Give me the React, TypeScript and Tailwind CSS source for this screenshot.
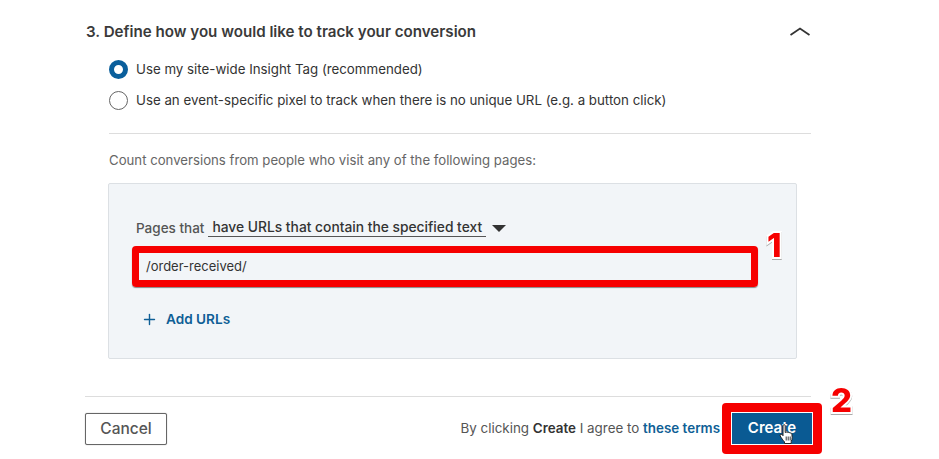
import React from "react";
import { Plus } from "lucide-react";

const FONT = "font-['Inter','Liberation_Sans',sans-serif]";

// annotation number drawn over the screenshot
const Callout = ({ n, className }: { n: string; className: string }) => (
  <span
    className={`absolute font-['Inter',sans-serif] font-extrabold text-[33px] leading-none text-[#f60000] [-webkit-text-stroke:4px_white] [paint-order:stroke_fill] [filter:drop-shadow(0_1px_0.5px_#aaa)] ${className}`}
  >
    {n}
  </span>
);

const Radio = ({ checked, label }: { checked?: boolean; label: string }) => (
  <label className="flex items-center h-[31px]">
    {checked ? (
      <span className="w-[19px] h-[19px] rounded-full border-[5px] border-[#0a5f9c] bg-white" />
    ) : (
      <span className="w-[19px] h-[19px] rounded-full border border-[#666] bg-white" />
    )}
    <span className="ml-[8px] text-[13.300px] text-[#333]">{label}</span>
  </label>
);

const HandCursor = () => (
  <svg
    viewBox="0 0 16 22"
    className="absolute left-[57px] top-[20px] w-[16px] h-[23px]"
    fill="#fff"
    stroke="#222"
    strokeWidth="1"
    strokeLinejoin="round"
  >
    <path d="M4 2.200c0-1.400 2.200-1.400 2.200 0V9l1-.4c.8-.3 1.500 0 1.700.5.9-.5 1.800-.2 2 .5 1-.4 1.900.1 2 1l.3 3.200c.1 1.600-.4 3-1 4.200v2H5.500v-1.600C4.200 17 2.400 14.600 1.200 12.500c-.7-1.300.7-2.400 1.800-1.400L4 12.200z" />
    <path d="M7.200 13v4M9.200 13v4M11.200 13v4" strokeWidth="0.9" />
  </svg>
);

export default function App() {
  return (
    <div className={`relative w-[939px] h-[459px] overflow-hidden bg-white ${FONT}`}>
      <div className="w-[726px] ml-[85px]">
        {/* section header */}
        <div className="flex items-center justify-between h-[20px] mt-[22px]">
          <h2 className="ml-[1px] text-[15.150px] font-semibold text-[#3a3a3a]">
            3. Define how you would like to track your conversion
          </h2>
          <svg viewBox="0 0 20 9" className="w-[20px] h-[9px] mr-[1px] mb-[1px]" fill="none" stroke="#333" strokeWidth="1.800">
            <path d="M0.500 8L10 1.500L19.500 8" />
          </svg>
        </div>

        <div className="ml-[24px]">
          <div className="mt-[12px]">
            <Radio checked label="Use my site-wide Insight Tag (recommended)" />
            <Radio label="Use an event-specific pixel to track when there is no unique URL (e.g. a button click)" />
          </div>
          <div className="h-px bg-[#ddd] mt-[17px]" />
          <p className="mt-[17px] text-[13.200px] leading-[18px] text-[#666]">
            Count conversions from people who visit any of the following pages:
          </p>

          {/* url rule panel */}
          <div className="w-[689px] h-[176px] -ml-px mt-[14px] bg-[#f2f5f8] border border-[#dce0e4] rounded-[2px] pl-[27px] pr-[38px]">
            <div className="flex items-center -ml-[4px] pl-[4px] mt-[34px] h-[20px]">
              <span className="text-[13.500px] text-[#555] font-medium">Pages that</span>
              <span className="ml-[4px] px-[4px] border-b border-[#555] text-[13.800px] text-[#333] font-medium leading-[17px]">
                have URLs that contain the specified text
              </span>
              <span className="ml-[6px] w-0 h-0 border-x-[7px] border-x-transparent border-t-[7px] border-t-[#333]" />
            </div>
            <div className="-ml-[4px] mt-[8px] h-[41px] border-[7px] border-[#f60000] rounded-[4px] flex items-center pl-[7px] text-[13px] text-[#333] shadow-[0_1px_1px_#888]">
              /order-received/
            </div>
            <div className="flex items-center mt-[22px] ml-[5px] h-[20px] text-[#0f5f96]">
              <Plus size={17} strokeWidth={2} />
              <span className="ml-[8px] text-[13.600px] font-semibold">Add URLs</span>
            </div>
          </div>
        </div>

        <div className="h-px bg-[#ddd] mt-[37px]" />

        {/* footer actions */}
        <div className="flex items-center justify-between mt-[6px] h-[51px]">
          <button className="w-[82px] h-[32px] border border-[#666] rounded-[2px] bg-white text-[15.500px] font-medium text-[#555] shadow-[0_0_1px_#888]">
            Cancel
          </button>
          <div className="flex items-center -mr-[11px]">
            <span className="text-[13.400px] text-[#555]">
              By clicking <b className="font-semibold text-[#333]">Create</b> I agree to{" "}
              <a className="font-semibold text-[#0f5f96]">these terms</a>
            </span>
            <div className="relative ml-[2px] w-[100px] h-[51px] bg-[#f60000] rounded-[4px] flex items-center justify-center">
              <button className="w-[82px] h-[33px] bg-[#0a5a93] border border-white text-[15px] font-semibold text-white">
                Create
              </button>
              <HandCursor />
            </div>
          </div>
        </div>
      </div>

      <Callout n="1" className="left-[767px] top-[229px]" />
      <Callout n="2" className="left-[831px] top-[384px]" />
    </div>
  );
}
